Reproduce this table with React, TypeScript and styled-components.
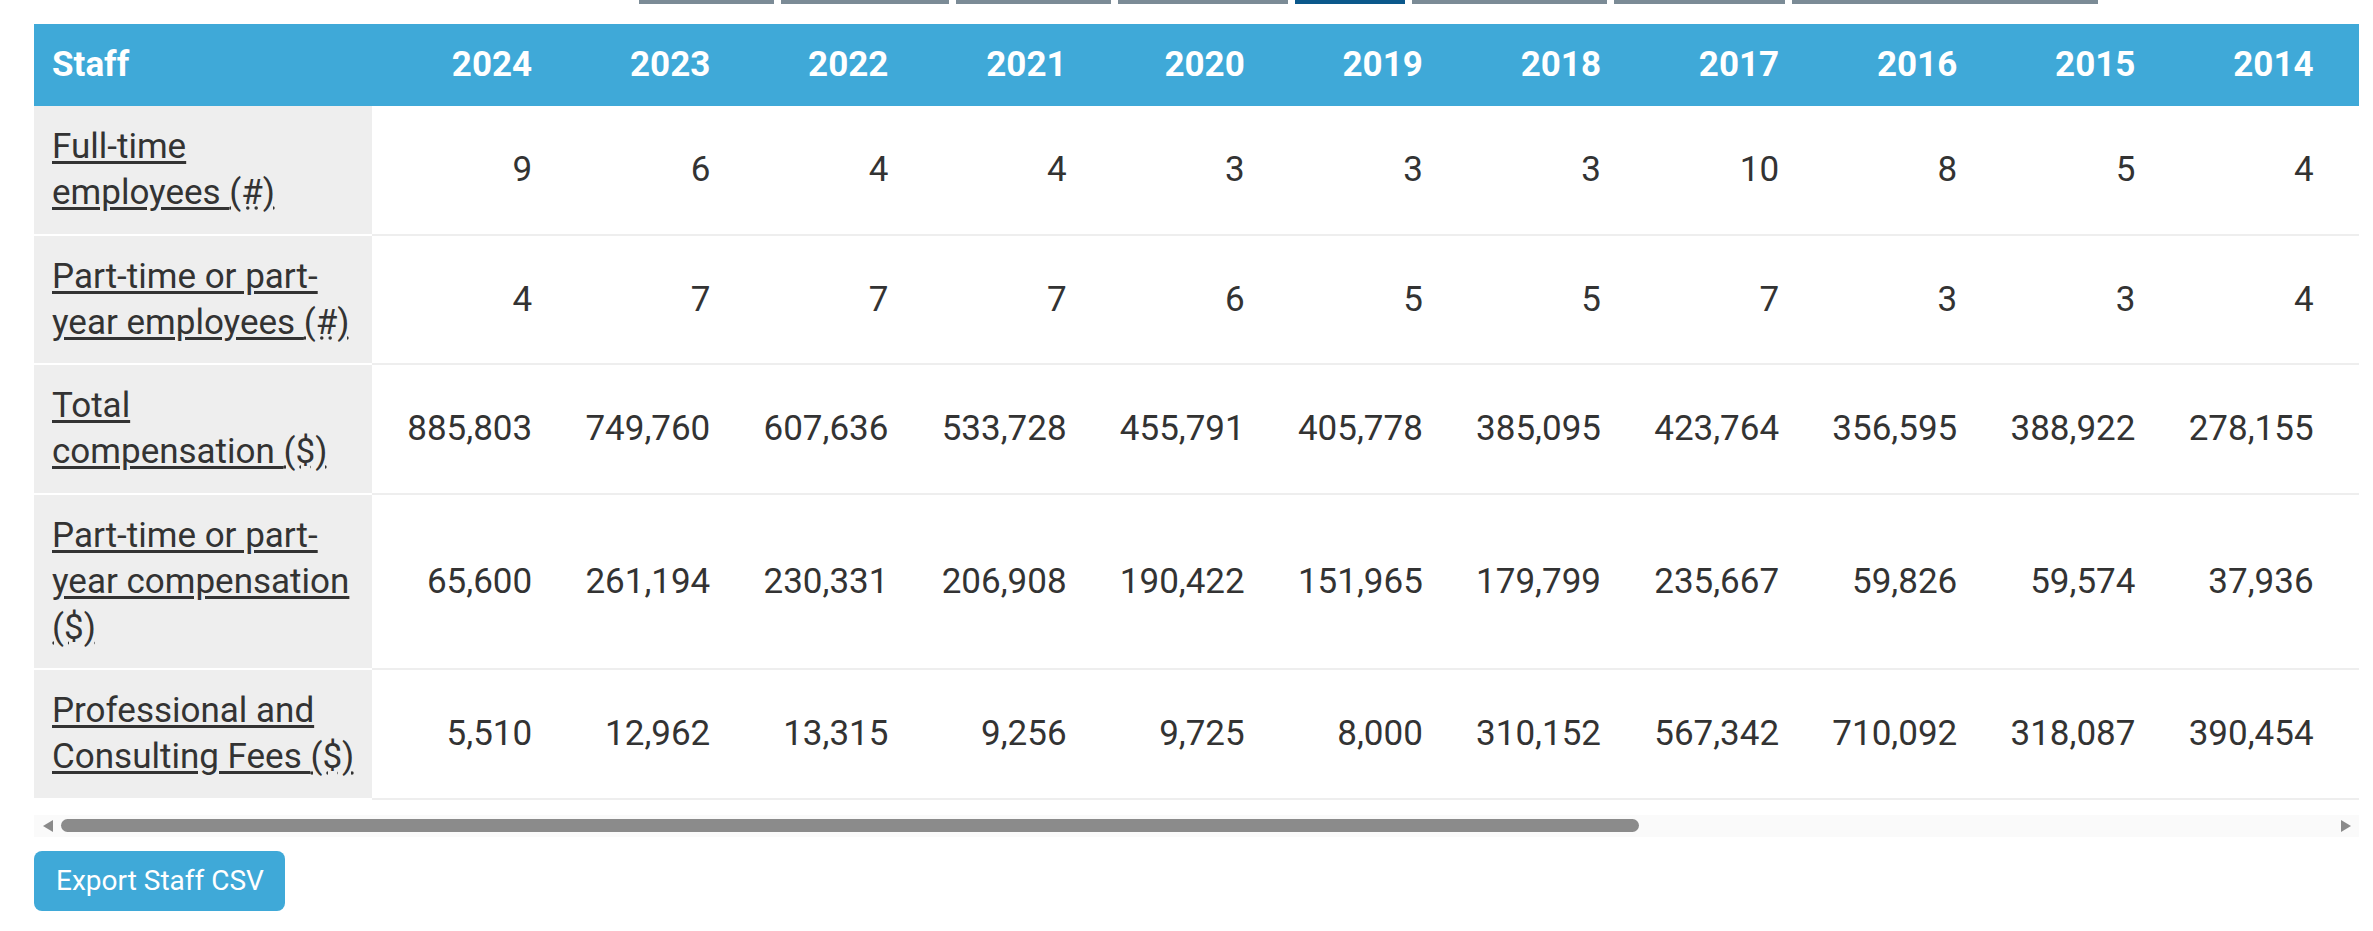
import React from "react";
import styled, { createGlobalStyle } from "styled-components";

const GlobalStyle = createGlobalStyle`
  html, body { margin: 0; padding: 0; background: #ffffff; }
  body { font-family: Roboto, "Noto Sans", "Liberation Sans", sans-serif; color: #333333; }
`;

const BLUE = "#3fa9d8";
const LABEL_W = 338;
const YEAR_W = 178.15;
const VIEW_W = 2325;

type Row = { label: string; unit: string; values: string[] };

const years = [2024, 2023, 2022, 2021, 2020, 2019, 2018, 2017, 2016, 2015, 2014, 2013, 2012, 2011, 2010, 2009, 2008];

const rows: Row[] = [
  { label: "Full-time employees ", unit: "(#)", values: ["9", "6", "4", "4", "3", "3", "3", "10", "8", "5", "4", "4", "4", "3", "3", "3", "2"] },
  { label: "Part-time or part-year employees ", unit: "(#)", values: ["4", "7", "7", "7", "6", "5", "5", "7", "3", "3", "4", "3", "3", "2", "2", "2", "2"] },
  { label: "Total compensation ", unit: "($)", values: ["885,803", "749,760", "607,636", "533,728", "455,791", "405,778", "385,095", "423,764", "356,595", "388,922", "278,155", "262,410", "251,088", "240,317", "231,942", "219,506", "204,118"] },
  { label: "Part-time or part-year compensation ", unit: "($)", values: ["65,600", "261,194", "230,331", "206,908", "190,422", "151,965", "179,799", "235,667", "59,826", "59,574", "37,936", "35,210", "33,480", "30,115", "28,760", "26,904", "24,300"] },
  { label: "Professional and Consulting Fees ", unit: "($)", values: ["5,510", "12,962", "13,315", "9,256", "9,725", "8,000", "310,152", "567,342", "710,092", "318,087", "390,454", "301,220", "288,640", "254,310", "230,875", "198,402", "176,950"] },
];

const tabs = [
  { w: 135, active: false },
  { w: 168, active: false },
  { w: 155, active: false },
  { w: 170, active: false },
  { w: 110, active: true },
  { w: 195, active: false },
  { w: 171, active: false },
  { w: 306, active: false },
];

const Page = styled.div`
  width: 2373px;
  padding: 0 0 0 34px;
  box-sizing: border-box;
`;

const TabBar = styled.nav`
  display: flex;
  gap: 7px;
  padding-left: 605px;
  height: 4px;
  margin-bottom: 20px;
`;

const Tab = styled.div<{ $active: boolean; $w: number }>`
  width: ${(p) => p.$w}px;
  height: 4px;
  background: ${(p) => (p.$active ? "#0b588b" : "#7b8b96")};
`;

const TableViewport = styled.div`
  width: ${VIEW_W}px;
  overflow: hidden;
`;

const Table = styled.table`
  border-collapse: collapse;
  table-layout: fixed;
  width: ${LABEL_W + YEAR_W * years.length}px;
  font-size: 35px;
  line-height: 46px;
`;

const HeadCell = styled.th<{ $first?: boolean }>`
  background: ${BLUE};
  color: #ffffff;
  font-weight: 700;
  text-align: ${(p) => (p.$first ? "left" : "right")};
  padding: 18px 18px;
  width: ${(p) => (p.$first ? LABEL_W : YEAR_W)}px;
  box-sizing: border-box;
`;

const LabelCell = styled.th`
  background: #eeeeee;
  text-align: left;
  font-weight: 400;
  padding: 18px 16px 17.6px 18px;
  border-bottom: 2px solid #ffffff;
  vertical-align: middle;
`;

const ValueCell = styled.td`
  text-align: right;
  padding: 18px 18px 17.6px;
  border-bottom: 2px solid #eeeeee;
  vertical-align: middle;
  white-space: nowrap;
  color: #333333;
`;

const LabelLink = styled.a`
  color: #333333;
  text-decoration: underline;
  text-underline-offset: 3px;
`;

const Unit = styled.abbr`
  text-decoration: underline dotted;
  text-underline-offset: 3px;
  color: #333333;
`;

const ScrollTrack = styled.div`
  width: ${VIEW_W}px;
  height: 22px;
  margin-top: 15px;
  background: #fafafa;
  display: flex;
  align-items: center;
`;

const ArrowButton = styled.div<{ $dir: "left" | "right" }>`
  width: 27px;
  height: 22px;
  flex: none;
  display: flex;
  align-items: center;
  justify-content: center;
  &::before {
    content: "";
    width: 0;
    height: 0;
    border-top: 6px solid transparent;
    border-bottom: 6px solid transparent;
    ${(p) => (p.$dir === "left" ? "border-right: 10px solid #8a8a8a;" : "border-left: 10px solid #8a8a8a;")}
  }
`;

const ThumbArea = styled.div`
  flex: 1;
  height: 13px;
`;

const Thumb = styled.div`
  height: 13px;
  border-radius: 7px;
  background: #8b8b8b;
`;

const ExportButton = styled.button`
  margin-top: 14px;
  height: 60px;
  padding: 0 21px 0 22px;
  border: none;
  border-radius: 8px;
  background: ${BLUE};
  color: #ffffff;
  font-family: Roboto, "Noto Sans", "Liberation Sans", sans-serif;
  font-size: 28px;
  font-weight: 400;
  cursor: pointer;
`;

export default function App() {
  const total = LABEL_W + YEAR_W * years.length - 20;
  const thumbPct = (VIEW_W / total) * 100;
  return (
    <>
      <GlobalStyle />
      <Page>
        <TabBar>
          {tabs.map((t, i) => (
            <Tab key={i} $active={t.active} $w={t.w} />
          ))}
        </TabBar>
        <TableViewport>
          <Table>
            <thead>
              <tr>
                <HeadCell $first>Staff</HeadCell>
                {years.map((y) => (
                  <HeadCell key={y}>{y}</HeadCell>
                ))}
              </tr>
            </thead>
            <tbody>
              {rows.map((r) => (
                <tr key={r.label}>
                  <LabelCell scope="row">
                    <LabelLink href="#">{r.label}</LabelLink>
                    <Unit title={r.unit === "(#)" ? "number" : "dollars"}>{r.unit}</Unit>
                  </LabelCell>
                  {r.values.map((v, i) => (
                    <ValueCell key={i}>{v}</ValueCell>
                  ))}
                </tr>
              ))}
            </tbody>
          </Table>
        </TableViewport>
        <ScrollTrack>
          <ArrowButton $dir="left" />
          <ThumbArea>
            <Thumb style={{ width: `${thumbPct}%` }} />
          </ThumbArea>
          <ArrowButton $dir="right" />
        </ScrollTrack>
        <ExportButton type="button">Export Staff CSV</ExportButton>
      </Page>
    </>
  );
}
